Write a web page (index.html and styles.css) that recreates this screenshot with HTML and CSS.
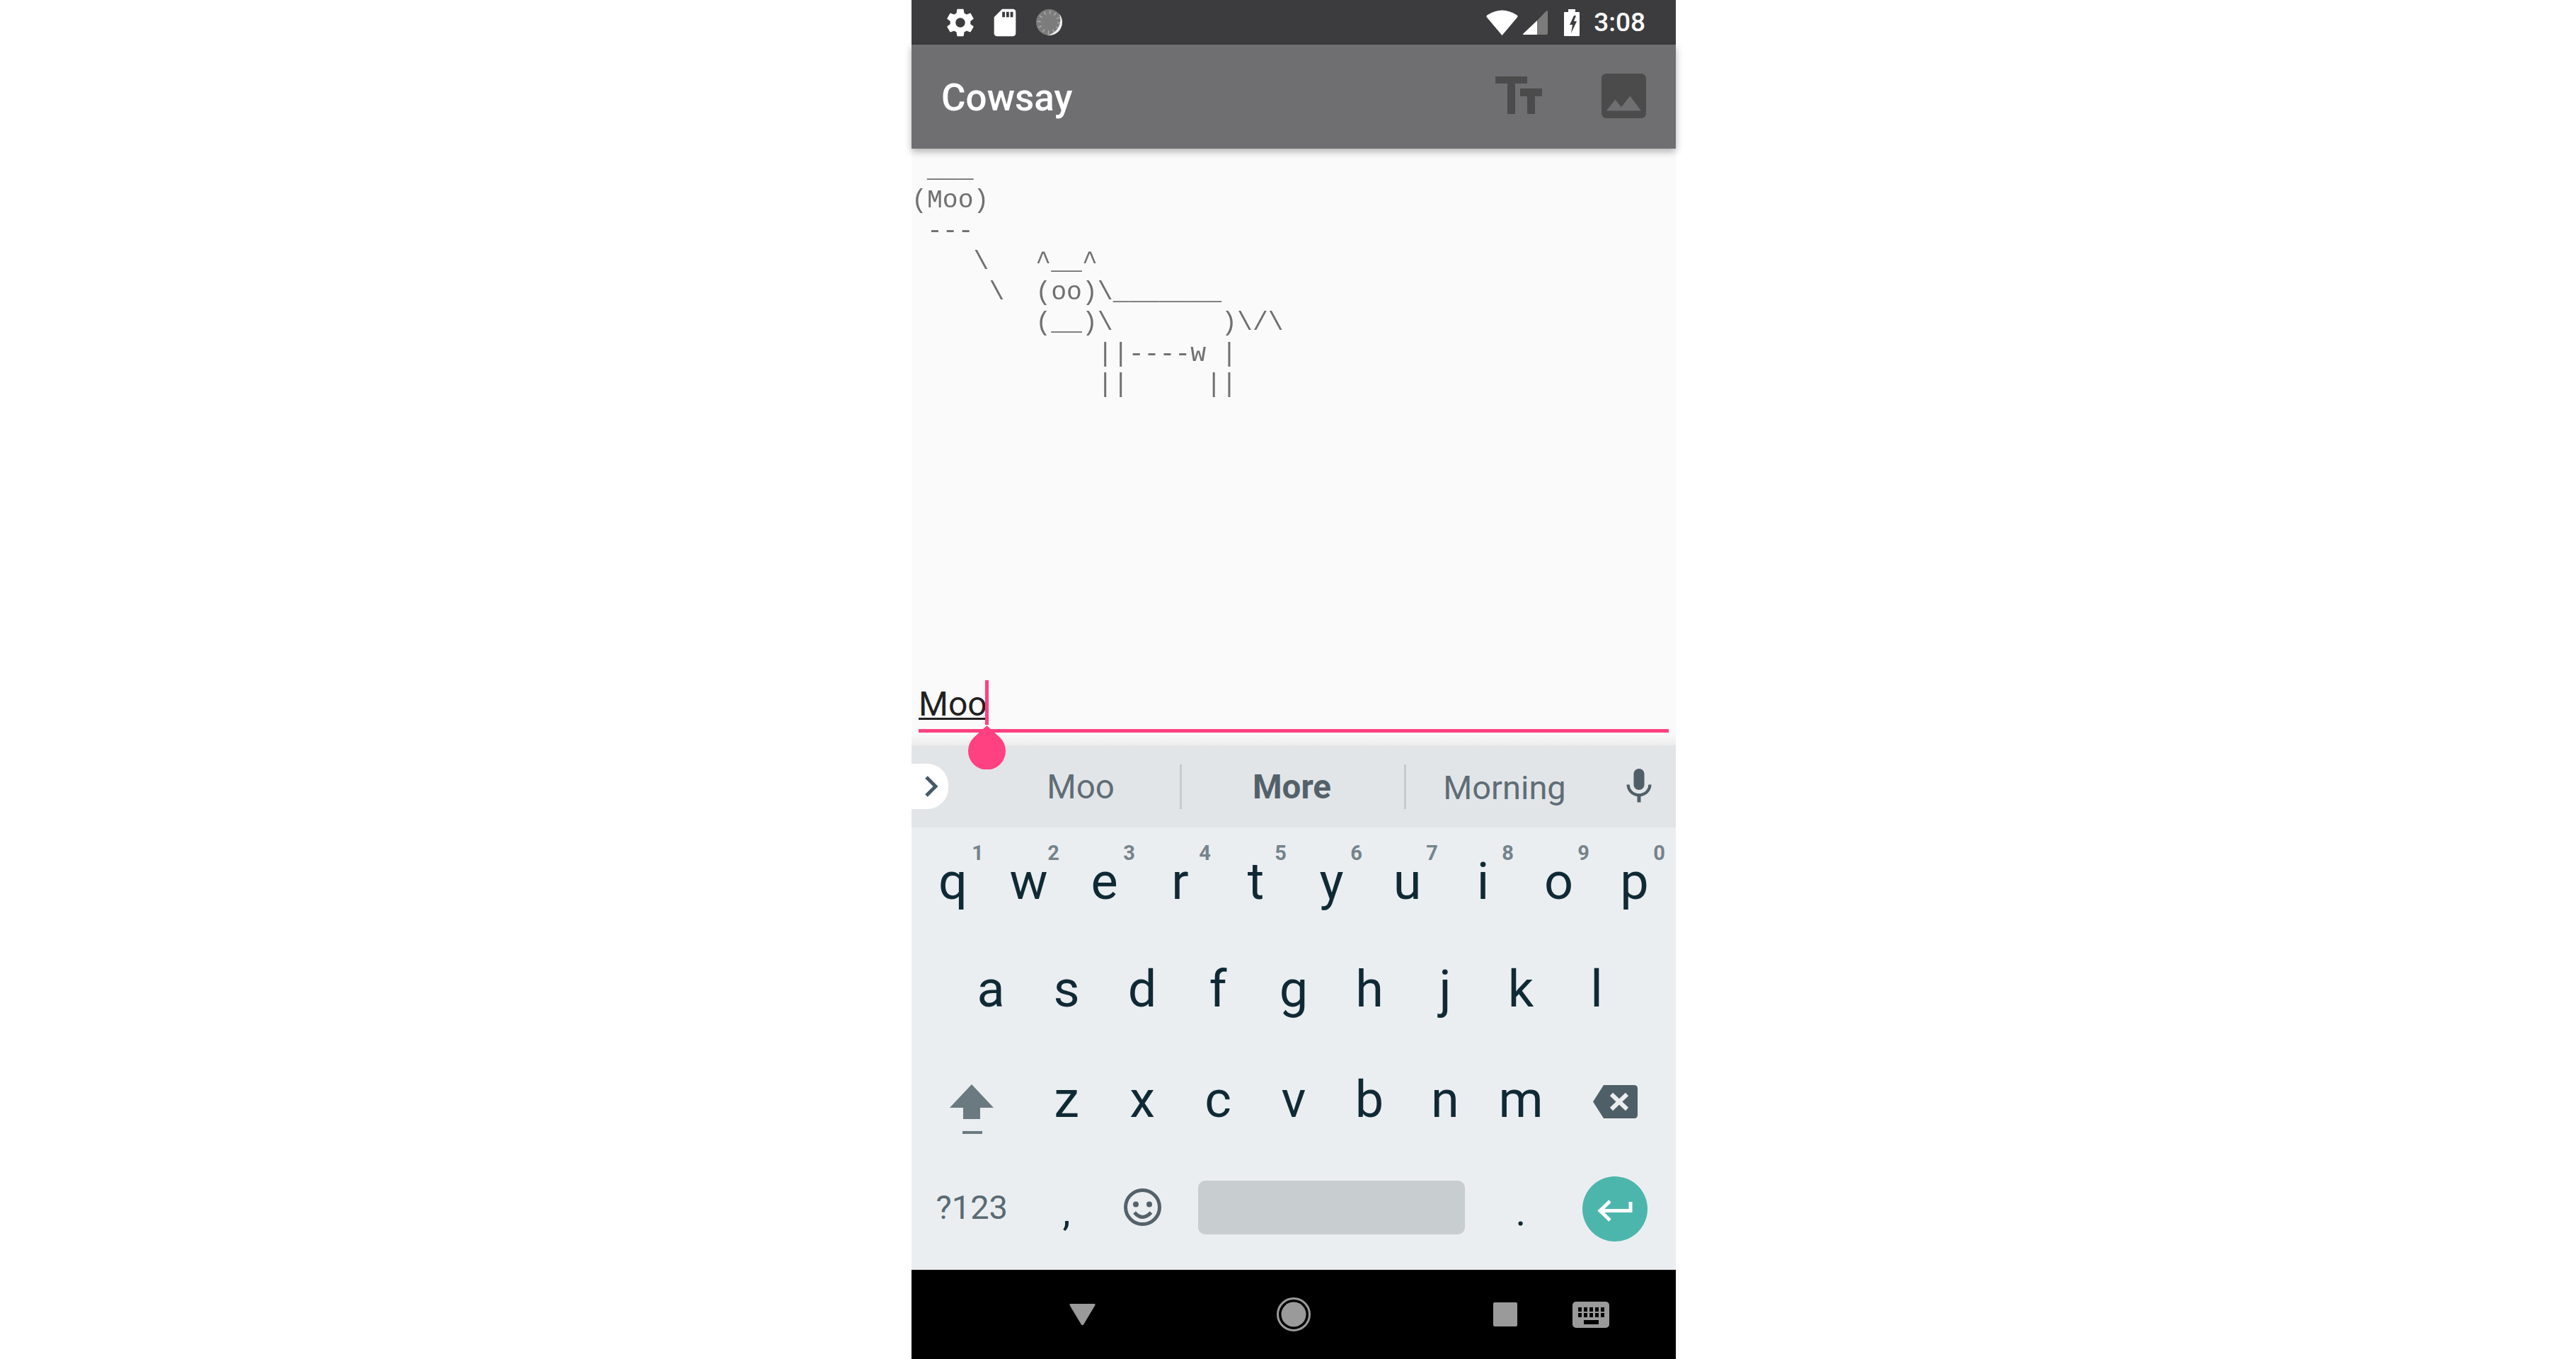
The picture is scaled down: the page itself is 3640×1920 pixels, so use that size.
FILE: index.html
```html
<!DOCTYPE html>
<html lang="en">
<head>
    <meta charset="UTF-8">
    <meta name="viewport" content="width=device-width, initial-scale=1.0">
    <title>Cowsay</title>
    <link rel="stylesheet" href="styles.css">
</head>
<body>

    <div class="phone">

        <div class="status-bar">
            <svg class="icon-gear" viewBox="0 0 24 24"><path fill="#fff" d="M19.43 12.98c.04-.32.07-.64.07-.98s-.03-.66-.07-.98l2.11-1.65c.19-.15.24-.42.12-.64l-2-3.46c-.12-.22-.39-.3-.61-.22l-2.49 1c-.52-.4-1.08-.73-1.69-.98l-.38-2.65C14.46 2.18 14.25 2 14 2h-4c-.25 0-.46.18-.49.42l-.38 2.65c-.61.25-1.17.59-1.69.98l-2.49-1c-.23-.09-.49 0-.61.22l-2 3.46c-.13.22-.07.49.12.64l2.11 1.65c-.04.32-.07.65-.07.98s.03.66.07.98l-2.11 1.65c-.19.15-.24.42-.12.64l2 3.46c.12.22.39.3.61.22l2.49-1c.52.4 1.08.73 1.69.98l.38 2.65c.03.24.24.42.49.42h4c.25 0 .46-.18.49-.42l.38-2.65c.61-.25 1.17-.59 1.69-.98l2.49 1c.23.09.49 0 .61-.22l2-3.46c.12-.22.07-.49-.12-.64l-2.11-1.65zM12 15.5c-1.93 0-3.5-1.57-3.5-3.5s1.57-3.5 3.5-3.5 3.5 1.57 3.5 3.5-1.57 3.5-3.5 3.5z"/></svg>
            <svg class="icon-sd" viewBox="0 0 24 24"><path fill="#fff" d="M18 2h-8L4.02 8 4 20c0 1.1.9 2 2 2h12c1.1 0 2-.9 2-2V4c0-1.1-.9-2-2-2zm-6 6h-2V4h2v4zm3 0h-2V4h2v4zm3 0h-2V4h2v4z"/></svg>
            <svg class="icon-sync" viewBox="0 0 38 38">
                <circle cx="18.5" cy="18.5" r="18.5" fill="#7c7c7c"/>
                <circle cx="18.5" cy="18.5" r="14" fill="none" stroke="#a8a8a8" stroke-width="5" stroke-dasharray="1.6 5.73"/>
                <path fill="#eee" d="M32.7 6.6A18.5 18.5 0 0 1 15.3 36.7A22 22 0 0 0 32.7 6.6Z"/>
            </svg>

            <div class="status-right">
                <svg class="icon-wifi" viewBox="0 0 45 36"><path fill="#fff" d="M22.5 36L1 10.5Q-.5 8.5 2 7Q22.5-6 43 7Q45.500 8.500 44 10.500Z"/></svg>
                <svg class="icon-signal" viewBox="0 0 35 35">
                    <path fill="#7b7b7b" d="M20 15L33 1.500Q35 0 35 3V33Q35 35 33 35H20Z"/>
                    <path fill="#fff" d="M20 15V35H1Q-.5 35 .5 33.500Z"/>
                </svg>
                <svg class="icon-battery" viewBox="0 0 22 38">
                    <path fill="#fff" d="M6 0H16V4H21Q22 4 22 5V37Q22 38 21 38H1Q0 38 0 37V5Q0 4 1 4H6Z"/>
                    <path fill="#3c3c3e" d="M14 9L8 22H12L10 34L18 17H14L17 9Z"/>
                </svg>
                <span class="clock">3:08</span>
            </div>
        </div>

        <div class="app-bar">
            <span class="app-title">Cowsay</span>
            <svg class="icon-text" viewBox="0 0 66 53">
                <rect x="0" y="0" width="45" height="10"/>
                <rect x="17" y="0" width="11" height="53"/>
                <rect x="35" y="17" width="31" height="11"/>
                <rect x="45" y="17" width="11" height="36"/>
            </svg>
            <svg class="icon-image" viewBox="3 3 18 18"><path d="M21 19V5c0-1.100-.9-2-2-2H5c-1.100 0-2 .9-2 2v14c0 1.100.9 2 2 2h14c1.100 0 2-.9 2-2zM8.500 13.500l2.500 3.010L14.500 12l4.500 6H5l3.500-4.500z"/></svg>
        </div>

        <div class="content">
<pre class="cow"> ___
(Moo)
 ---
    \   ^__^
     \  (oo)\_______
        (__)\       )\/\
            ||----w |
            ||     ||</pre>

            <div class="field">
                <span class="field-text">Moo</span>
                <div class="caret"></div>
                <svg class="handle" viewBox="0 0 53 62"><path d="M26.500 0L45 17A26.500 26.500 0 1 1 8 17Z"/></svg>
            </div>
            <div class="field-fade"></div>
        </div>

        <div class="suggestions">
            <div class="expand-tab">
                <svg class="icon-chevron" viewBox="0 0 20 32"><path d="M3 3L16 16L3 29"/></svg>
            </div>
            <div class="suggestion side">Moo</div>
            <div class="divider"></div>
            <div class="suggestion middle">More</div>
            <div class="divider"></div>
            <div class="suggestion side last">Morning</div>
            <svg class="icon-mic" viewBox="0 0 24 24"><path d="M12 14c1.660 0 2.990-1.340 2.990-3L15 5c0-1.660-1.340-3-3-3S9 3.340 9 5v6c0 1.660 1.340 3 3 3zm5.300-3c0 3-2.540 5.100-5.300 5.100S6.700 14 6.700 11H5c0 3.410 2.720 6.230 6 6.720V21h2v-3.280c3.280-.48 6-3.300 6-6.720h-1.700z"/></svg>
        </div>

        <div class="keyboard">
            <div class="row row-top">
                <div class="key">q<span class="hint">1</span></div>
                <div class="key">w<span class="hint">2</span></div>
                <div class="key">e<span class="hint">3</span></div>
                <div class="key">r<span class="hint">4</span></div>
                <div class="key">t<span class="hint">5</span></div>
                <div class="key">y<span class="hint">6</span></div>
                <div class="key">u<span class="hint">7</span></div>
                <div class="key">i<span class="hint">8</span></div>
                <div class="key">o<span class="hint">9</span></div>
                <div class="key">p<span class="hint">0</span></div>
            </div>
            <div class="row row-home">
                <div class="key">a</div>
                <div class="key">s</div>
                <div class="key">d</div>
                <div class="key">f</div>
                <div class="key">g</div>
                <div class="key">h</div>
                <div class="key">j</div>
                <div class="key">k</div>
                <div class="key">l</div>
            </div>
            <div class="row">
                <div class="key wide shift-key">
                    <svg class="icon-shift" viewBox="0 0 64 70">
                        <path d="M32 0L63 33H44V49H20V33H1Z"/>
                        <rect x="19" y="66" width="28" height="4"/>
                    </svg>
                </div>
                <div class="key">z</div>
                <div class="key">x</div>
                <div class="key">c</div>
                <div class="key">v</div>
                <div class="key">b</div>
                <div class="key">n</div>
                <div class="key">m</div>
                <div class="key wide backspace-key">
                    <svg class="icon-backspace" viewBox="0 0 63 47">
                        <path class="backspace-body" d="M15 0H58Q63 0 63 5V42Q63 47 58 47H15L0 23.500Z"/>
                        <path class="backspace-x" d="M26 13L48 34M48 13L26 34"/>
                    </svg>
                </div>
            </div>
            <div class="row row-bottom">
                <div class="key wide symbols">?123</div>
                <div class="key punct">,</div>
                <div class="key">
                    <svg class="icon-emoji" viewBox="0 0 53 53">
                        <circle cx="26.500" cy="26.500" r="24"/>
                        <circle class="eye" cx="17" cy="22.500" r="4"/>
                        <circle class="eye" cx="36" cy="22.500" r="4"/>
                        <path d="M15 34Q26.500 47 38.500 34"/>
                    </svg>
                </div>
                <div class="key space-key"><div class="space-bar"></div></div>
                <div class="key punct">.</div>
                <div class="key wide enter-key">
                    <svg class="icon-enter" viewBox="0 0 92 92">
                        <circle cx="46" cy="46" r="46"/>
                        <path d="M68 36V48.500H25M39 35L25 48.500L39 62"/>
                    </svg>
                </div>
            </div>
        </div>

        <div class="nav-bar">
            <svg class="nav-back" viewBox="0 0 37 31"><path d="M2 0H35Q37 0 36.500 2L20 29.500Q18.500 31 17 29.500L.5 2Q0 0 2 0Z"/></svg>
            <svg class="nav-home" viewBox="0 0 48 48">
                <circle class="ring" cx="24" cy="24" r="22.500"/>
                <circle cx="24" cy="24" r="17.500"/>
            </svg>
            <div class="nav-recent"></div>
            <svg class="nav-keyboard" viewBox="0 0 52 37">
                <rect class="kb-body" width="52" height="37" rx="5"/>
                <path d="M8 8h5v6h-5zM16 8h5v6h-5zM24 8h5v6h-5zM32 8h5v6h-5zM40 8h5v6h-5zM8 16h5v6h-5zM16 16h5v6h-5zM24 16h5v6h-5zM32 16h5v6h-5zM40 16h5v6h-5zM16 26h21v6h-21z"/>
            </svg>
        </div>

    </div>

</body>
</html>
```

FILE: styles.css
```css
body {
    font-family: Roboto, sans-serif;
    margin: 0;
    padding: 0;
    background-color: white;
    width: 3640px;
    height: 1920px;
    overflow: hidden;
}
.phone {
    width: 1080px;
    height: 1920px;
    margin-left: 1288px;
    display: flex;
    flex-direction: column;
    background-color: #fafafa;
}

/* status bar */
.status-bar {
    height: 63px;
    flex: none;
    background-color: #3c3c3e;
    display: flex;
    align-items: center;
    padding: 0 43px 0 46px;
    box-sizing: border-box;
}
.icon-gear, .icon-sd {
    width: 46px;
    height: 46px;
}
.icon-sd {
    margin-left: 17px;
}
.icon-sync {
    width: 38px;
    height: 38px;
    margin-left: 21px;
}
.status-right {
    margin-left: auto;
    display: flex;
    align-items: center;
}
.icon-wifi {
    width: 45px;
    height: 36px;
}
.icon-signal {
    width: 35px;
    height: 35px;
    margin-left: 7px;
}
.icon-battery {
    width: 22px;
    height: 38px;
    margin-left: 23px;
}
.clock {
    color: white;
    font-size: 37px;
    font-weight: 500;
    margin-left: 20px;
}

/* app bar */
.app-bar {
    height: 147px;
    flex: none;
    background-color: #6f6f71;
    display: flex;
    align-items: center;
    padding: 0 42px;
    box-sizing: border-box;
    box-shadow: 0 4px 10px rgba(0, 0, 0, 0.3);
    position: relative;
    z-index: 1;
}
.app-title {
    color: white;
    font-size: 53px;
    font-weight: 500;
    margin-right: auto;
    margin-top: 2px;
}
.icon-text {
    width: 66px;
    height: 53px;
    fill: #4b4b4c;
    margin-bottom: 4px;
}
.icon-image {
    width: 63px;
    height: 63px;
    fill: #4b4b4c;
    margin-left: 84px;
    margin-bottom: 2px;
}

/* output and text field */
.content {
    flex: 1;
    display: flex;
    flex-direction: column;
    justify-content: space-between;
    min-height: 0;
}
.cow {
    font-family: "Liberation Mono", monospace;
    font-size: 36.5px;
    line-height: 43.33px;
    color: #707070;
    margin: 0;
    padding-top: 8.6px;
    will-change: transform;
}
.field {
    margin: auto 10px 0;
    padding-bottom: 13px;
    border-bottom: 5px solid #ff4081;
    position: relative;
    z-index: 2;
}
.field-text {
    display: inline-block;
    vertical-align: top;
    font-size: 48px;
    line-height: 38px;
    color: #212121;
    border-bottom: 3px solid #212121;
}
.caret {
    position: absolute;
    left: 94px;
    bottom: 6px;
    width: 5px;
    height: 63px;
    background-color: #ff4081;
}
.handle {
    position: absolute;
    left: 70px;
    bottom: -57px;
    width: 53px;
    height: 62px;
    fill: #ff4081;
}
.field-fade {
    height: 18px;
    flex: none;
    background: linear-gradient(#fafafa, #ededed);
}

/* suggestion strip */
.suggestions {
    height: 116px;
    flex: none;
    background-color: #e2e5e8;
    display: flex;
    align-items: center;
}
.expand-tab {
    width: 52px;
    height: 64px;
    margin-right: 47px;
    background-color: white;
    border-radius: 0 30px 30px 0;
    display: flex;
    align-items: center;
    padding-left: 18px;
    box-sizing: border-box;
}
.icon-chevron {
    width: 20px;
    height: 32px;
    fill: none;
    stroke: #455a64;
    stroke-width: 5px;
}
.suggestion {
    font-size: 47.5px;
    color: #5f6d75;
    text-align: center;
    box-sizing: border-box;
    padding-top: 2px;
}
.suggestion.side {
    width: 280px;
}
.suggestion.middle {
    width: 314px;
    padding-right: 3px;
    font-weight: 700;
    color: #546169;
}
.suggestion.last {
    font-size: 47px;
    padding-right: 2px;
}
.divider {
    width: 3px;
    height: 63px;
    background-color: #c5cacd;
}
.icon-mic {
    width: 60px;
    height: 60px;
    margin-left: 19px;
    fill: #4f5f67;
}

/* keyboard */
.keyboard {
    height: 625px;
    flex: none;
    background-color: #ebeef1;
    display: flex;
    flex-direction: column;
    padding: 0 5px;
    box-sizing: border-box;
}
.row {
    flex: 1;
    display: flex;
}
.row-home {
    padding: 0 53.5px;
}
.key {
    flex: 1 1 0;
    min-width: 0;
    position: relative;
    display: flex;
    align-items: center;
    justify-content: center;
    box-sizing: border-box;
    padding-bottom: 12px;
    font-size: 72px;
    color: #102a35;
}
.row-top .key {
    padding-bottom: 3px;
}
.hint {
    position: absolute;
    top: 22px;
    right: 10px;
    font-size: 29px;
    line-height: 29px;
    font-weight: 700;
    color: #75838a;
}
.wide {
    flex-grow: 1.5;
}
.shift-key {
    padding-bottom: 0;
    padding-top: 14px;
}
.icon-shift {
    width: 64px;
    height: 70px;
    fill: #6b7980;
}
.backspace-key {
    padding-bottom: 7px;
}
.icon-backspace {
    width: 63px;
    height: 47px;
}
.backspace-body {
    fill: #4f5f67;
}
.backspace-x {
    fill: none;
    stroke: #ebeef1;
    stroke-width: 6px;
}
.row-bottom .key {
    padding-bottom: 20px;
}
.row-bottom .symbols {
    font-size: 47px;
    color: #5a6a72;
}
.row-bottom .punct {
    font-size: 56px;
    padding-bottom: 8px;
}
.icon-emoji {
    width: 53px;
    height: 53px;
    fill: none;
    stroke: #546169;
    stroke-width: 5px;
}
.icon-emoji .eye {
    fill: #546169;
    stroke: none;
}
.key.space-key {
    flex-grow: 4;
}
.space-bar {
    width: 377px;
    height: 76px;
    background-color: #c8cdd0;
    border-radius: 10px;
}
.row-bottom .enter-key {
    padding-bottom: 16px;
}
.icon-enter {
    width: 92px;
    height: 92px;
    margin-right: 2px;
    fill: none;
    stroke: white;
    stroke-width: 5px;
}
.icon-enter circle {
    fill: #4db6ac;
    stroke: none;
}

/* navigation bar */
.nav-bar {
    height: 126px;
    flex: none;
    background-color: black;
    display: flex;
    align-items: center;
    padding-left: 223px;
    box-sizing: border-box;
}
.nav-back {
    width: 37px;
    height: 31px;
    fill: #9a9a9a;
}
.nav-home {
    width: 48px;
    height: 48px;
    margin-left: 256px;
    fill: #9a9a9a;
}
.nav-home .ring {
    fill: none;
    stroke: #9a9a9a;
    stroke-width: 3px;
}
.nav-recent {
    width: 34px;
    height: 34px;
    margin-left: 258px;
    background-color: #9a9a9a;
    border-radius: 2px;
}
.nav-keyboard {
    width: 52px;
    height: 37px;
    margin-left: 78px;
    fill: black;
}
.nav-keyboard .kb-body {
    fill: #9a9a9a;
}
```
